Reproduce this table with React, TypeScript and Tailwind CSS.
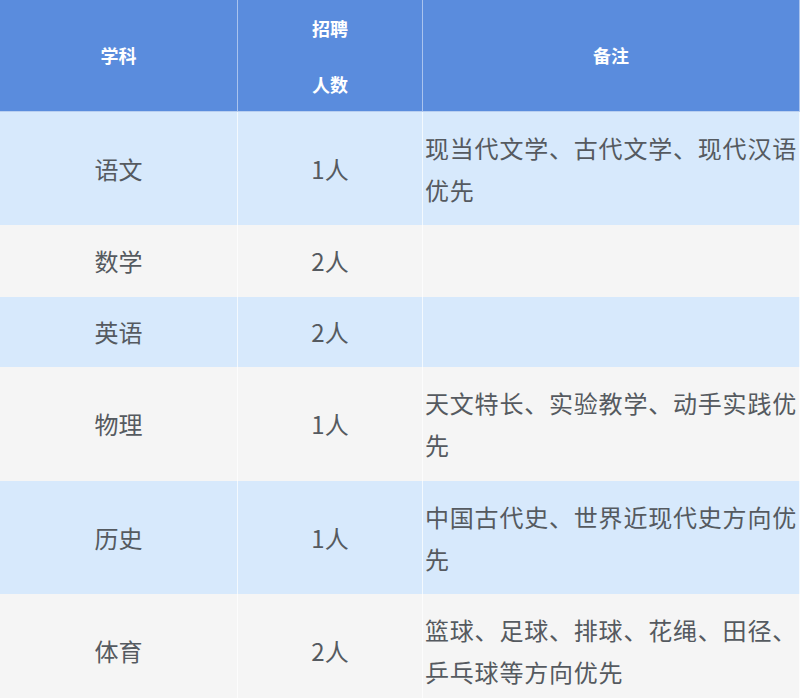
import React from "react";

const rows = [
  { s: "语文", n: "1人", r: "现当代文学、古代文学、现代汉语优先", h: "h-[113px]", bg: "bg-[#d7e9fc]" },
  { s: "数学", n: "2人", r: "", h: "h-[72px]", bg: "bg-[#f5f5f5]" },
  { s: "英语", n: "2人", r: "", h: "h-[70px]", bg: "bg-[#d7e9fc]" },
  { s: "物理", n: "1人", r: "天文特长、实验教学、动手实践优先", h: "h-[114px]", bg: "bg-[#f5f5f5]" },
  { s: "历史", n: "1人", r: "中国古代史、世界近现代史方向优先", h: "h-[113px]", bg: "bg-[#d7e9fc]" },
  { s: "体育", n: "2人", r: "篮球、足球、排球、花绳、田径、乒乓球等方向优先", h: "h-[114px]", bg: "bg-[#f5f5f5]" },
];

export default function App() {
  return (
    <div
      className="w-[800px] h-[698px] overflow-hidden bg-white"
      style={{ fontFamily: '"Noto Sans CJK SC", "Noto Sans", sans-serif' }}
    >
      <div className="flex h-[112px] bg-[#5a8cdd] text-white font-bold text-[18px] border-b border-[#b9cff0]">
        <div className="w-[238px] shrink-0 flex items-center justify-center border-r border-[#a9c3ee]">学科</div>
        <div className="w-[185px] shrink-0 flex flex-col items-center justify-center leading-[56px] border-r border-[#a9c3ee]">
          <span>招聘</span>
          <span>人数</span>
        </div>
        <div className="flex-1 flex items-center justify-center border-r border-[#a9c3ee]">备注</div>
      </div>
      {rows.map((row, i) => (
        <div key={i} className={`flex ${row.h} ${row.bg} text-[#555a60] text-[24px]`}>
          <div className="w-[238px] shrink-0 flex items-center justify-center border-r border-white/70">{row.s}</div>
          <div className="w-[185px] shrink-0 flex items-center justify-center border-r border-white/70">{row.n}</div>
          <div className="flex-1 flex items-center pl-[2px] pr-[1px] leading-[42px] tracking-[0.8px] border-r border-white/70">
            <span>{row.r}</span>
          </div>
        </div>
      ))}
    </div>
  );
}
